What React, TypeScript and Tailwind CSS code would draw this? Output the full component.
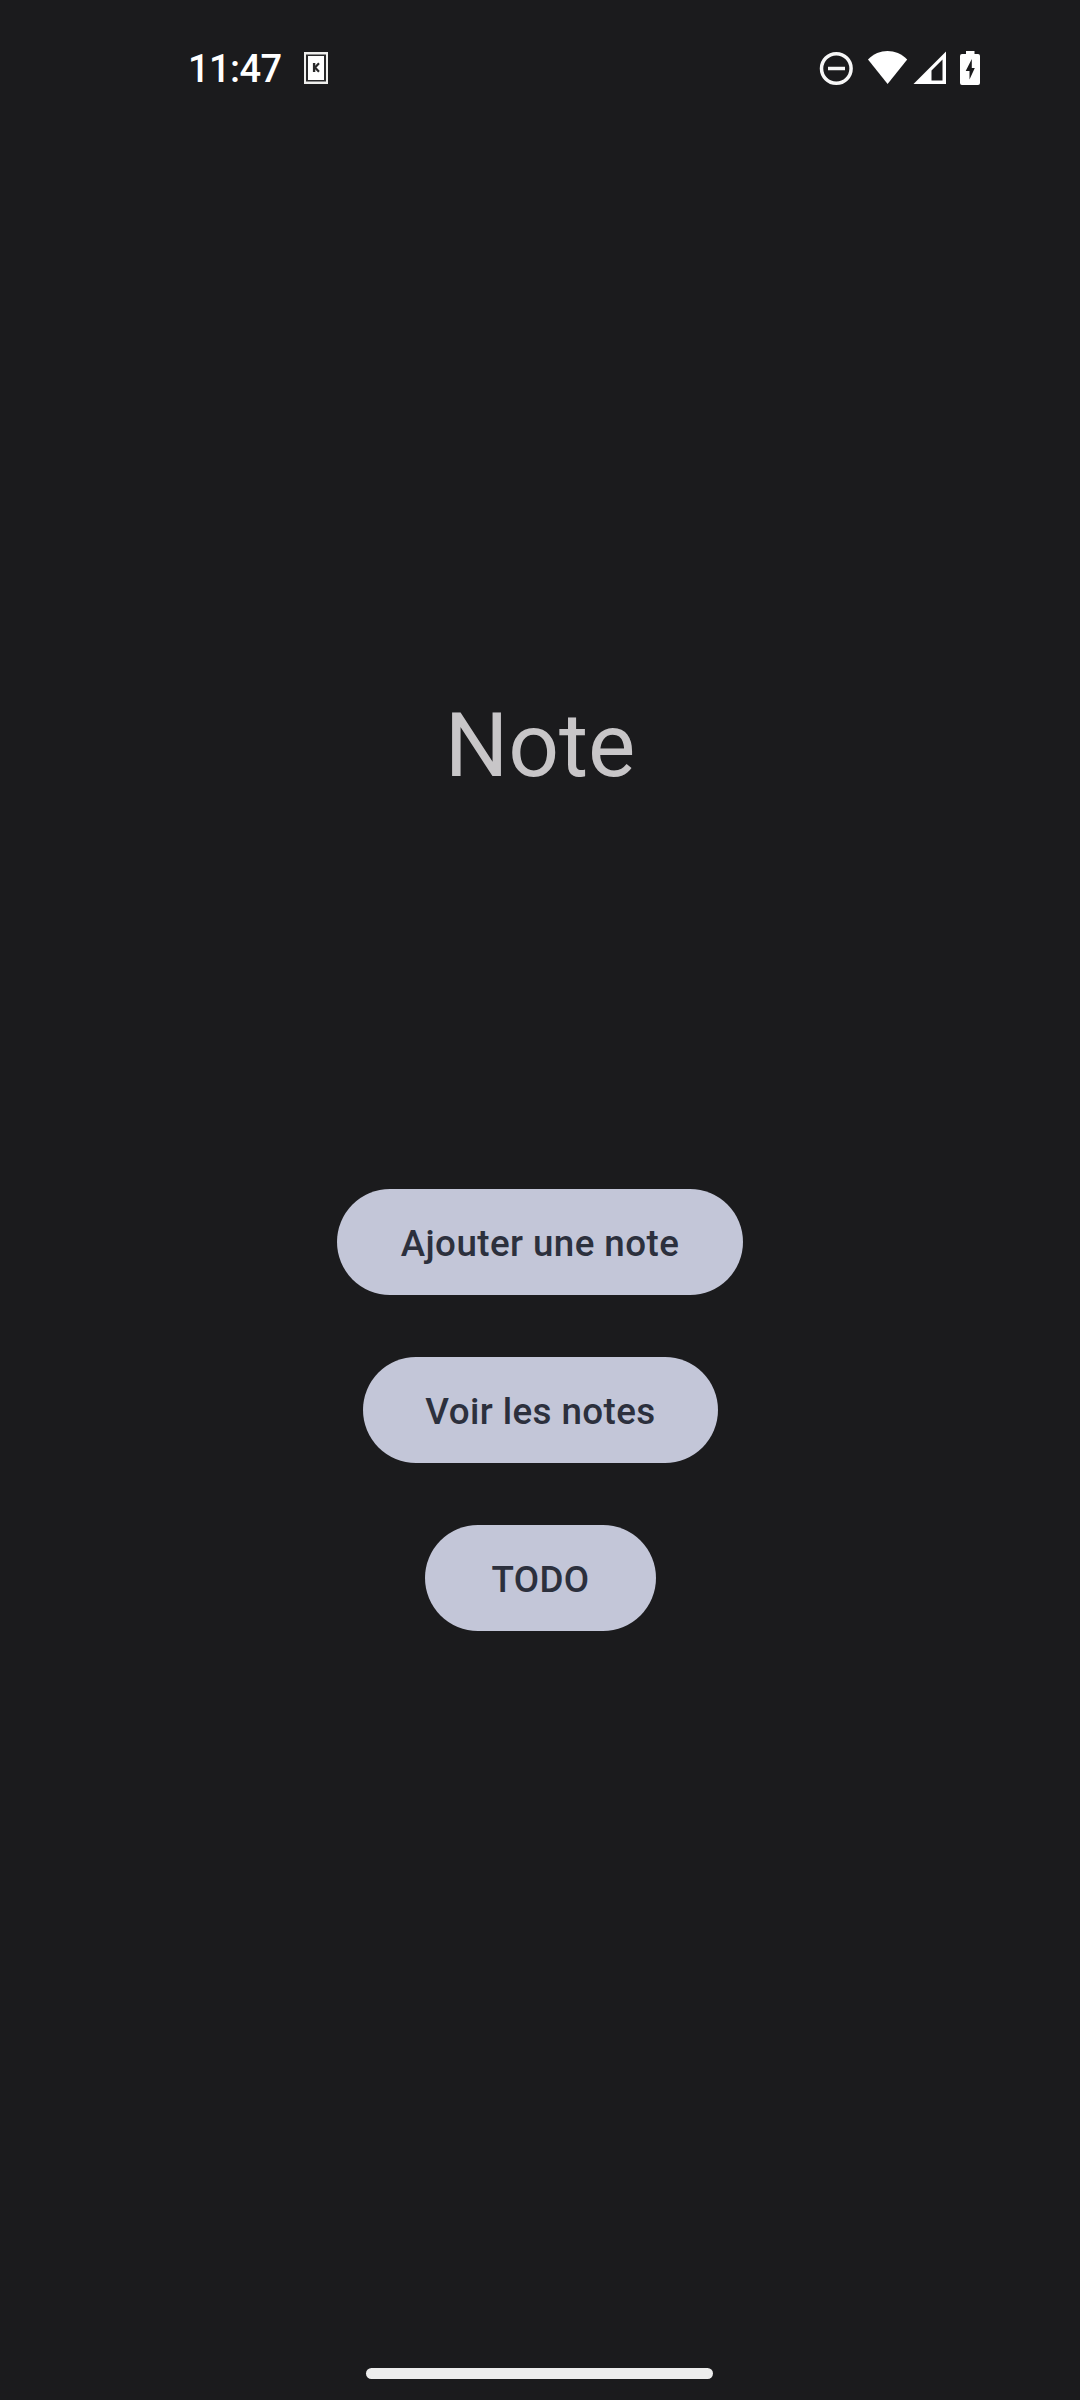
const actions = [
  { label: "Ajouter une note", size: "mr-px w-[406px]" },
  { label: "Voir les notes", size: "w-[355px]" },
  { label: "TODO", size: "w-[231px]" },
];

function AppIcon() {
  return (
    <svg className="ml-[22px] h-8 w-6" viewBox="0 0 24 32" fill="none">
      <path d="M0 0h24v32H0z" fill="#efefed" />
      <path d="M2 2.5h20v27H2z" fill="#29292a" />
      <path d="M4 4h16v24H4z" fill="#fff" />
      <path d="M10.1 11v9" stroke="#29292a" strokeWidth="2.4" />
      <path d="M15 11.2l-4 4.3 4 4.3" stroke="#29292a" strokeWidth="2.2" />
    </svg>
  );
}

function StatusIcons() {
  return (
    <svg className="h-9 w-[162px]" viewBox="819 50 162 36" fill="none">
      <circle cx="836.3" cy="68.5" r="14.8" stroke="#f7f7f7" strokeWidth="3.5" />
      <path d="M828 68.5h17" stroke="#f7f7f7" strokeWidth="3.5" />
      <path d="M868 59.5C879 48.2 896 48.2 907.2 59.5L887.6 84Z" fill="#fff" />
      <path fillRule="evenodd" d="M946 51.5V84H913.5ZM942.5 59.5L931.5 70.5V80.5H942.5Z" fill="#fff" />
      <path fillRule="evenodd" d="M966 51H974.5V54H978Q980 54 980 56V83Q980 85 978 85H962Q960 85 960 83V56Q960 54 962 54H966ZM971.8 59L965.7 71H969.5V79.5L974.8 68H971.8Z" fill="#fff" />
    </svg>
  );
}

export default function App() {
  return (
    <div className="flex h-[2400px] w-[1080px] flex-col items-center bg-[#1b1b1d] font-['Roboto',sans-serif]">
      <header className="flex h-[136px] w-full items-center justify-between pl-[188px] pr-[99px] text-white">
        <div className="flex items-center">
          <span className="w-[94px] pt-[3px] text-[38px] font-medium tracking-[-0.6px]">11:47</span>
          <AppIcon />
        </div>
        <StatusIcons />
      </header>
      <h1 className="mt-[557px] text-[89.25px] leading-[106px] tracking-[-0.2px] text-[#c8c6c8]">Note</h1>
      <main className="mt-[390px] flex flex-col items-center gap-[62px] pl-px">
        {actions.map(({ label, size }) => (
          <button key={label} className={`flex h-[106px] items-center justify-center rounded-full bg-[#c3c6d8] pt-[3px] text-[36.75px] font-medium tracking-[0.42px] text-[#2c303d] ${size}`}>
            {label}
          </button>
        ))}
      </main>
      <div className="mb-[21px] mr-px mt-auto h-[11px] w-[347px] rounded-full bg-[#ededed]" />
    </div>
  );
}
